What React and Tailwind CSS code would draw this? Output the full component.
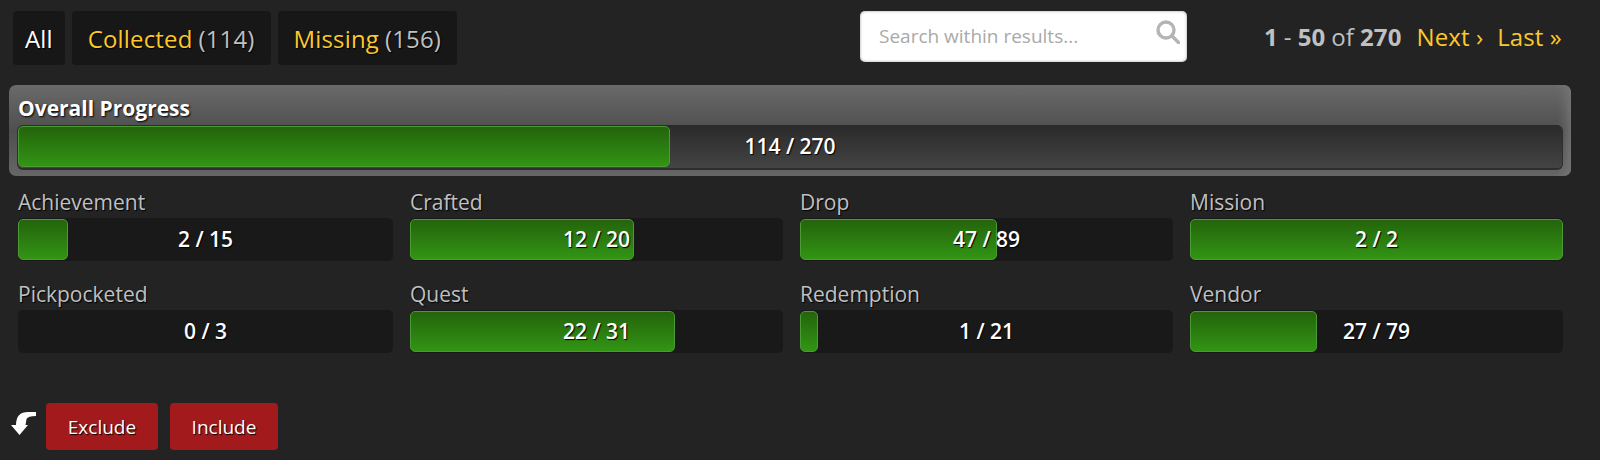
const categories = [
  { name: 'Achievement', have: 2, total: 15 },
  { name: 'Crafted', have: 12, total: 20 },
  { name: 'Drop', have: 47, total: 89 },
  { name: 'Mission', have: 2, total: 2 },
  { name: 'Pickpocketed', have: 0, total: 3 },
  { name: 'Quest', have: 22, total: 31 },
  { name: 'Redemption', have: 1, total: 21 },
  { name: 'Vendor', have: 27, total: 79 },
];

function Bar({ have, total, track }) {
  const pct = (have / total) * 100;
  return (
    <div className={`relative h-[43px] rounded-[5px] py-px ${track}`}>
      {have > 0 && (
        <div
          className="h-full rounded-[5px] border border-[#4c9a35] bg-gradient-to-b from-[#24640c] to-[#329514]"
          style={{ width: `${pct}%` }}
        />
      )}
      <div className="absolute inset-0 flex items-center justify-center text-[21px] font-semibold text-white [text-shadow:1px_1px_1px_#000]">
        {have} / {total}
      </div>
    </div>
  );
}

function Tab({ label, count }) {
  return (
    <div className={`flex h-[54px] items-center rounded-[4px] bg-[#171717] pt-[2px] text-[24px] tracking-[0.15px] [text-shadow:1px_1px_1px_#000] ${count ? 'px-4' : 'px-3'}`}>
      {count ? (
        <>
          <span className="text-[#fcc82b]">{label}</span>
          <span className="ml-[6px] text-[#bfc0c2]">({count})</span>
        </>
      ) : (
        <span className="text-white">{label}</span>
      )}
    </div>
  );
}

export default function App() {
  return (
    <div className="h-[460px] w-[1600px] overflow-hidden bg-[#232323] font-['Open_Sans',sans-serif]">
      <div className="flex h-[85px] items-start pt-[11px]">
        <div className="ml-[13px] flex w-[847px] gap-[7px]">
          <Tab label="All" />
          <Tab label="Collected" count="114" />
          <Tab label="Missing" count="156" />
        </div>
        <div className="relative flex h-[51px] w-[327px] items-center rounded-[5px] bg-white pl-[19px] text-[19px] text-[#a9a9a9] shadow-[inset_0_0_3px_#999]">
          Search within results...
          <svg className="absolute right-[7px] top-[9px] h-[24px] w-[24px]" viewBox="0 0 24 24" fill="none" stroke="#b4b4b4" strokeWidth="3.4">
            <circle cx="10" cy="10" r="8" />
            <path d="M16 16 L22.5 22.5" strokeLinecap="round" />
          </svg>
        </div>
        <div className="ml-[77px] flex h-[51px] items-center text-[24px] tracking-[0.1px] text-[#bfc0c2]">
          <b className="font-bold">1</b>
          <span className="mx-[6px]">-</span>
          <b className="font-bold">50</b>
          <span className="mx-[6px]">of</span>
          <b className="font-bold">270</b>
          <span className="ml-[15px] text-[#fcc82b]">Next ›</span>
          <span className="ml-[14px] text-[#fcc82b]">Last »</span>
        </div>
      </div>

      <div className="ml-[9px] h-[91px] w-[1562px] rounded-[7px] bg-gradient-to-b from-[#6a6a6a] via-[#4f4f4f] to-[#666] px-[9px] pt-[10px] shadow-[inset_-12px_0_12px_-8px_#777]">
        <div className="h-[30px] text-[21px] font-bold leading-[26px] text-white [text-shadow:1px_1px_2px_#000]">Overall Progress</div>
        <Bar have={114} total={270} track="bg-gradient-to-b from-[#2a2a2a] to-[#444] shadow-[0_1px_0_1px_#2e2e2e]" />
      </div>

      <div className="ml-[18px] mt-[11px] grid grid-cols-[375px_373px_373px_373px] gap-x-[17px] gap-y-[18px]">
        {categories.map((c) => (
          <div key={c.name}>
            <div className="h-[31px] text-[21px] leading-[30px] text-[#bfc0c2] [text-shadow:1px_1px_1px_#000]">{c.name}</div>
            <Bar have={c.have} total={c.total} track="bg-[#191919]" />
          </div>
        ))}
      </div>

      <div className="mt-[50px] flex items-start">
        <svg className="ml-[10px] mt-[8px] h-[25px] w-[27px] blur-[0.4px]" viewBox="0 0 27 25" fill="white">
          <path d="M26 1 L26 5 Q18 5 16.5 8 L15.5 14 L18 14 L9.5 24 L1 14 L6 14 Q6 1 18 1 Z" />
        </svg>
        <button className="ml-[9px] h-[47px] w-[112px] rounded-[4px] bg-[#a31a1c] pt-[2px] text-[19px] font-medium text-white [text-shadow:1px_1px_1px_#000]">Exclude</button>
        <button className="ml-[12px] h-[47px] w-[108px] rounded-[4px] bg-[#a31a1c] pt-[2px] text-[19px] font-medium text-white [text-shadow:1px_1px_1px_#000]">Include</button>
      </div>
    </div>
  );
}
